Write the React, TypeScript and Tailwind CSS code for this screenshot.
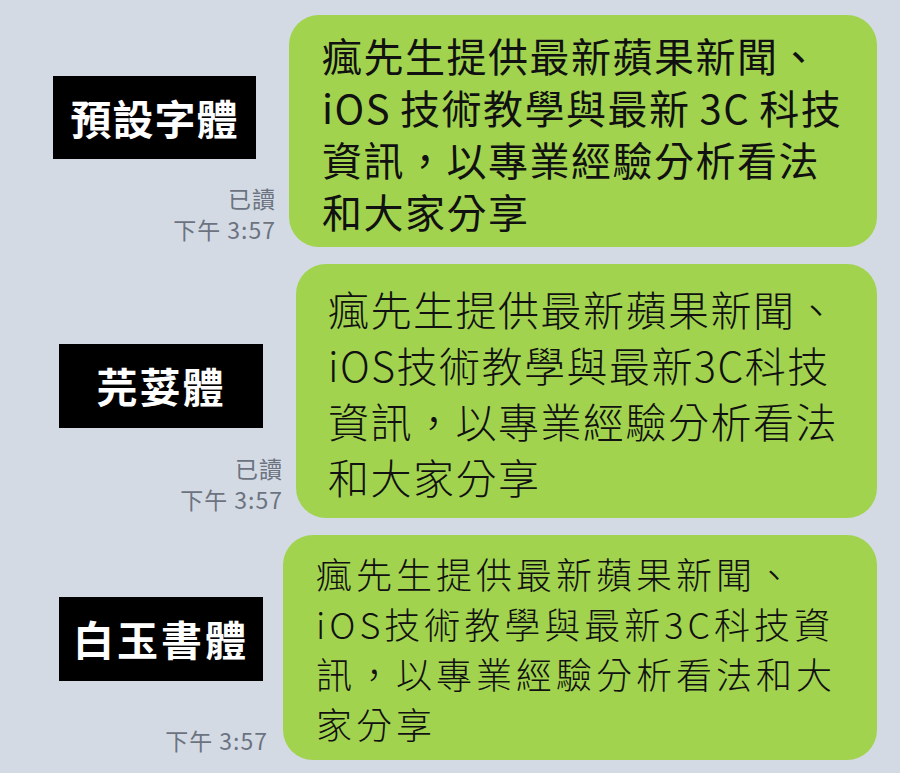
import type { ReactNode } from 'react';

const cjk = '"Noto Sans CJK TC", "Noto Sans", sans-serif';

type Row = {
  label: string;
  read: boolean;
  lines: ReactNode[];
  leftW: string;
  labelBox: string;
  metaBox: string;
  bubble: string;
  text: string;
};

const rows: Row[] = [
  {
    label: '預設字體',
    read: true,
    lines: [
      '瘋先生提供最新蘋果新聞、',
      <>
        iOS<span className="ml-[9px]">技術教學與最新</span>
        <span className="ml-[9px]">3C</span>
        <span className="ml-[9px]">科技</span>
      </>,
      '資訊，以專業經驗分析看法',
      '和大家分享',
    ],
    leftW: 'w-[289px] h-[232px]',
    labelBox: 'ml-[53px] mt-[61px] w-[203px] h-[83px] text-[41px] tracking-[1px]',
    metaBox: 'pr-[13px] pb-[2px]',
    bubble: 'w-[588px] h-[232px] pl-[33px] pt-[14px]',
    text: 'text-[40px] leading-[52px] tracking-[1.5px] font-normal',
  },
  {
    label: '芫荽體',
    read: true,
    lines: ['瘋先生提供最新蘋果新聞、', 'iOS技術教學與最新3C科技', '資訊，以專業經驗分析看法', '和大家分享'],
    leftW: 'w-[296px] h-[254px]',
    labelBox: 'ml-[59px] mt-[80px] w-[204px] h-[84px] text-[41px] tracking-[2px]',
    metaBox: 'pr-[13px] pb-[3px]',
    bubble: 'w-[581px] h-[254px] pl-[32px] pt-[16px]',
    text: 'text-[41px] leading-[56px] tracking-[1.5px] font-light',
  },
  {
    label: '白玉書體',
    read: false,
    lines: ['瘋先生提供最新蘋果新聞、', 'iOS技術教學與最新3C科技資', '訊，以專業經驗分析看法和大', '家分享'],
    leftW: 'w-[283px] h-[225px]',
    labelBox: 'ml-[59px] mt-[62px] w-[204px] h-[84px] text-[41px] tracking-[3px]',
    metaBox: 'pr-[15px] pb-[4px]',
    bubble: 'w-[594px] h-[225px] pl-[33px] pt-[13px]',
    text: 'text-[36px] leading-[50px] tracking-[4px] font-extralight',
  },
];

function ChatRow({ r }: { r: Row }) {
  return (
    <div className="flex">
      <div className={`flex flex-col shrink-0 ${r.leftW}`}>
        <div
          className={`bg-black text-white font-bold flex items-center justify-center ${r.labelBox}`}
          style={{ fontFamily: cjk }}
        >
          {r.label}
        </div>
        <div
          className={`mt-auto flex flex-col items-end text-[#6c7380] text-[23px] leading-[31px] tracking-[1px] ${r.metaBox}`}
          style={{ fontFamily: cjk }}
        >
          {r.read && <span>已讀</span>}
          <span>下午 3:57</span>
        </div>
      </div>
      <div className={`bg-[#a1d34f] rounded-[30px] shrink-0 ${r.bubble}`}>
        <div className={`text-[#111] whitespace-nowrap ${r.text}`} style={{ fontFamily: cjk }}>
          {r.lines.map((l, i) => (
            <div key={i}>{l}</div>
          ))}
        </div>
      </div>
    </div>
  );
}

export default function App() {
  return (
    <div className="w-[900px] h-[773px] bg-[#d3dae4] overflow-hidden flex flex-col pt-[15px] gap-[17px]">
      {rows.map((r) => (
        <ChatRow key={r.label} r={r} />
      ))}
    </div>
  );
}
